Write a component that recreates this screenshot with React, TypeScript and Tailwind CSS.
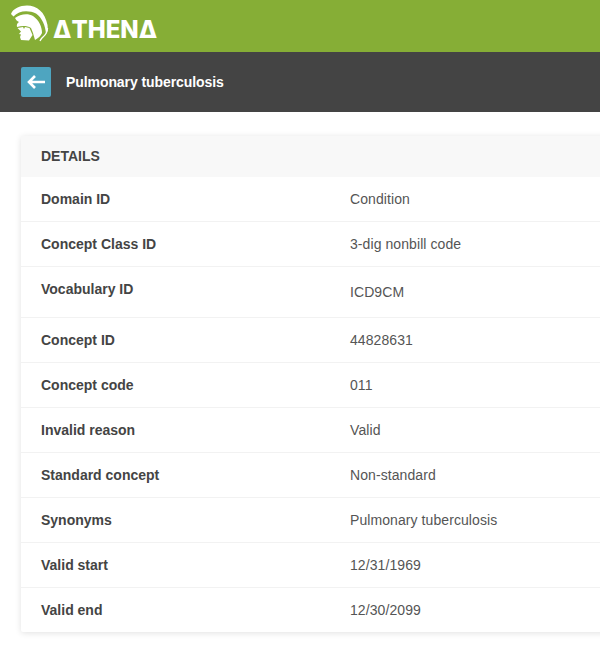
const rows: { label: string; value: string; tall?: boolean }[] = [
  { label: "Domain ID", value: "Condition" },
  { label: "Concept Class ID", value: "3-dig nonbill code" },
  { label: "Vocabulary ID", value: "ICD9CM", tall: true },
  { label: "Concept ID", value: "44828631" },
  { label: "Concept code", value: "011" },
  { label: "Invalid reason", value: "Valid" },
  { label: "Standard concept", value: "Non-standard" },
  { label: "Synonyms", value: "Pulmonary tuberculosis" },
  { label: "Valid start", value: "12/31/1969" },
  { label: "Valid end", value: "12/30/2099" },
];

function Logo() {
  return (
    <svg width="40" height="42" viewBox="10 3 40 42" className="shrink-0">
      <path
        fill="#fff"
        d="M11 14 C13 8.500 20 5.500 27 5.500 C37 5.500 45 12 47.500 25 C48 29 47.500 31 46 34 C45.500 26 42 17.500 36 13.500 C29 10 19 10 13.500 16.500 Z"
      />
      <path
        fill="#fff"
        d="M15 18 C20 14 28 13 33 16 C39 20 42 27 42 33 C41 36 38 38 35 40 L33 33 L31 28 C27 25.500 22 25.500 17 27 C16.500 25 17 23 19 22 C17 21 16 20 15 18 Z"
      />
      <path
        fill="#fff"
        d="M17.500 28 L23 27 L24 29 L25 27 L29.500 28 L32.500 35 L29 40.500 L21 40 L20 37 L21 34.500 L19 34 L21 31.500 Z"
      />
      <path fill="none" stroke="#fff" strokeWidth="1.300" d="M47.500 28 C47.500 34 44 36 42 38 C41 39 40.500 40 40 41" />
    </svg>
  );
}

export default function App() {
  return (
    <div className="min-h-[649px] bg-white font-['Liberation_Sans',Arial,sans-serif] overflow-hidden">
      <header className="h-[52px] bg-[#86ae36] flex items-start pl-[10px] pt-[3px] gap-[3px]">
        <Logo />
        <span
          aria-label="ATHENA"
          className="text-white font-extrabold text-[24px] leading-[30px] mt-[12px] font-['Inter',sans-serif]"
        >
          ΔTHENΔ
        </span>
      </header>
      <div className="h-[60px] bg-[#444444] flex items-center pl-[21px]">
        <div className="w-[30px] h-[30px] rounded-[2px] bg-[#4ea5c0] flex items-center justify-center">
          <svg width="20" height="16" viewBox="0 0 20 16" fill="none" stroke="#fff" strokeWidth="2.6">
            <path d="M19 8H3M9 2L3 8l6 6" />
          </svg>
        </div>
        <span className="ml-[15px] text-white font-bold text-[14px] tracking-[-0.08px]">Pulmonary tuberculosis</span>
      </div>
      <div className="pt-[24px] pl-[21px]">
        <div className="w-[620px] bg-white rounded-[2px] shadow-[0_1px_6px_rgba(0,0,0,0.12)]">
          <div className="h-[41px] bg-[#f8f8f8] flex items-center pl-[20px] text-[14px] font-bold text-[#444444]">
            DETAILS
          </div>
          {rows.map((r, i) => (
            <div
              key={r.label}
              className={
                r.tall
                  ? "h-[51px] flex pt-[12px] pl-[20px] text-[14px] text-[#444444] border-b border-[#f2f2f2]"
                  : i === rows.length - 1
                  ? "h-[44px] flex items-center pl-[20px] text-[14px] text-[#444444]"
                  : "h-[45px] flex items-center pl-[20px] text-[14px] text-[#444444] border-b border-[#f2f2f2]"
              }
            >
              <span className="w-[309px] font-bold">{r.label}</span>
              <span className={r.tall ? "mt-[3px] tracking-[0.08px] text-[#555555]" : "tracking-[0.08px] text-[#555555]"}>{r.value}</span>
            </div>
          ))}
        </div>
      </div>
    </div>
  );
}
